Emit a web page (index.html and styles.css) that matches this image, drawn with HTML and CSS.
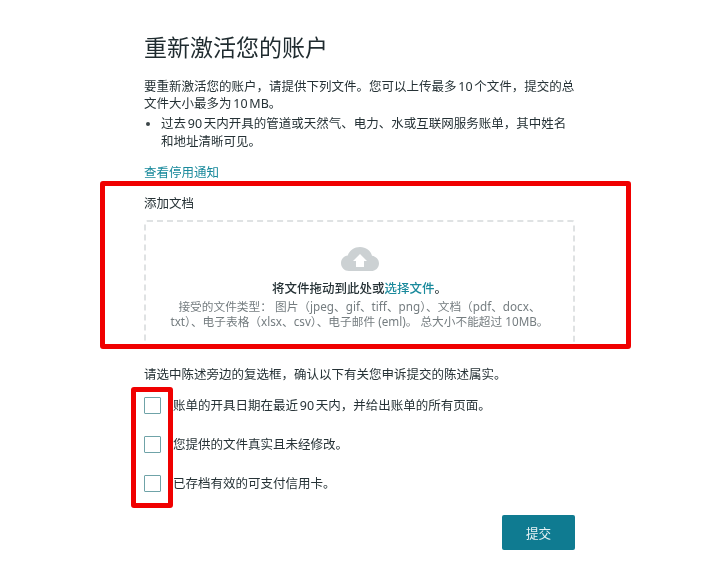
FILE: index.html
```html
<!DOCTYPE html>
<html lang="zh-CN">
<head>
    <meta charset="UTF-8">
    <meta name="viewport" content="width=device-width, initial-scale=1.0">
    <title>重新激活您的账户</title>
    <link rel="stylesheet" href="styles.css">
</head>
<body>

<div class="page">
    <h1>重新激活您的账户</h1>
    <p class="intro">要重新激活您的账户，请提供下列文件。您可以上传最多 10 个文件，提交的总文件大小最多为 10 MB。</p>
    <ul class="docs">
        <li>过去 90 天内开具的管道或天然气、电力、水或互联网服务账单，其中姓名和地址清晰可见。</li>
    </ul>
    <a class="link notice" href="#">查看停用通知</a>

    <div class="add-label">添加文档</div>
    <div class="dropzone">
        <svg class="cloud" viewBox="0 0 38 24" width="38" height="24">
            <path fill="#ccd1d3" d="M8 24C3.500 24 0 20.500 0 16C0 12 3 8.800 6.800 8.400C8.500 3.400 13.500 0 19 0C25 0 29.800 3.600 31 8.800C35 9.500 38 12.500 38 16.400C38 20.700 34.500 24 30 24Z"/>
            <path fill="#fff" d="M19 7L26 14H23V20H15V14H12Z"/>
        </svg>
        <div class="drop-title">将文件拖动到此处或<a class="link" href="#">选择文件</a>。</div>
        <div class="drop-hint">接受的文件类型： 图片（jpeg、gif、tiff、png）、文档（pdf、docx、<br>txt）、电子表格（xlsx、csv）、电子邮件 (eml)。 总大小不能超过 10MB。</div>
    </div>

    <p class="confirm">请选中陈述旁边的复选框，确认以下有关您申诉提交的陈述属实。</p>
    <div class="checks">
        <label class="check"><span class="box"></span>账单的开具日期在最近 90 天内，并给出账单的所有页面。</label>
        <label class="check"><span class="box"></span>您提供的文件真实且未经修改。</label>
        <label class="check"><span class="box"></span>已存档有效的可支付信用卡。</label>
    </div>
    <div class="actions">
        <button class="submit">提交</button>
    </div>

    <!-- red annotation boxes drawn over the screenshot -->
    <div class="mark mark-upload"></div>
    <div class="mark mark-checks"></div>
</div>

</body>
</html>
```

FILE: styles.css
```css
* { margin: 0; padding: 0; box-sizing: border-box; }
html, body { height: 100%; overflow: hidden; }
body { background: #fff; color: #263236; font-family: "Noto Sans", "Noto Sans CJK SC", sans-serif; font-size: 12.5px; word-spacing: -1.5px; }
.page { position: relative; width: 724px; height: 563px; padding: 31px 149px 0 144px; filter: blur(0.4px); }

h1 { font-size: 23px; font-weight: 400; line-height: 30px; color: #1f2b2f; font-family: "Noto Sans CJK SC", sans-serif; }
.intro { margin-top: 17px; line-height: 17px; }
.docs { list-style: none; margin-top: 3px; }
.docs li { position: relative; padding-left: 17px; line-height: 18px; }
.docs li::before { content: ""; position: absolute; left: 2px; top: 7px; width: 4px; height: 4px; border-radius: 50%; background: #3b4649; }
.link { color: #1a8a9c; text-decoration: none; }
.notice { display: block; margin-top: 13px; line-height: 18px; }

.add-label { margin-top: 13px; line-height: 18px; }
.dropzone { margin-top: 7px; height: 126px; border: 2px dashed #dfe2e3; border-radius: 3px; padding-top: 25px; text-align: center; }
.cloud { display: block; margin: 0 auto; }
.drop-title { margin-top: 9px; line-height: 18px; font-weight: 500; color: #263236; }
.drop-hint { margin-top: 1px; line-height: 15px; font-size: 11.7px; word-spacing: 0; color: #757d80; }

.confirm { margin-top: 20px; line-height: 18px; }
.checks { margin-top: 12px; display: flex; flex-direction: column; gap: 22px; }
.check { display: flex; align-items: center; gap: 12px; height: 17px; }
.box { width: 17px; height: 17px; margin-top: 2px; flex: none; border: 1px solid #6fa3a8; border-radius: 1px; background: #fff; }

.actions { margin-top: 24px; display: flex; justify-content: flex-end; }
.submit { width: 73px; height: 35px; border: none; border-radius: 2px; background: #0f7b91; color: #e8f3f5; font-family: inherit; font-size: 12.6px; }

.mark { position: absolute; border: 5px solid #f00000; border-radius: 3px; }
.mark-upload { left: 100px; top: 181px; width: 531px; height: 168px; }
.mark-checks { left: 131px; top: 387px; width: 42px; height: 121px; }
```
